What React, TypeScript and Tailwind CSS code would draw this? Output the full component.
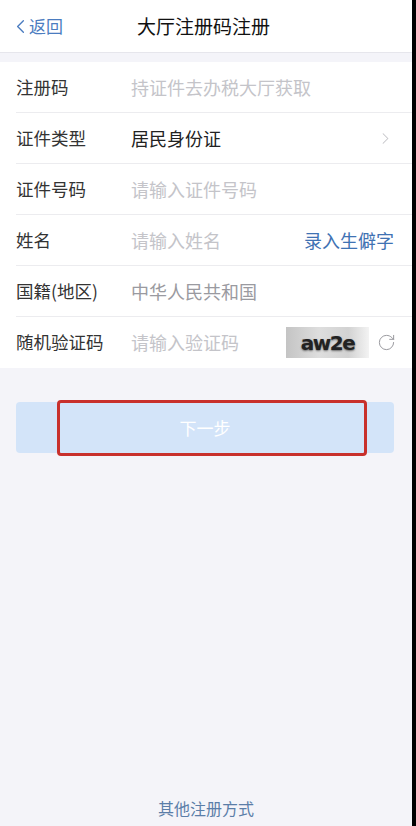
import { ChevronLeft, ChevronRight, RotateCw } from 'lucide-react';

const font = { fontFamily: '"Noto Sans CJK SC", "Noto Sans", sans-serif' };

function Row({ label, children, last }: { label: string; children: React.ReactNode; last?: boolean }) {
    return (
        <div className={`flex items-center h-[51px] pr-[20px] ${last ? '' : 'border-b border-[#ececef]'}`}>
            <span className="w-[115px] shrink-0 text-[17.5px] text-[#333]">{label}</span>
            <div className="flex-1 flex items-center min-w-0 text-[18px]">{children}</div>
        </div>
    );
}

export default function App() {
    return (
        <div style={font} className="relative w-[416px] h-[826px] bg-[#f4f4f9] flex flex-col border-r-[4px] border-black">
            {/* nav */}
            <div className="h-[53px] bg-white flex items-center relative border-b border-[#e6e6ec]">
                <div className="flex items-center pl-[9px] text-[#4b7cc0] text-[17px]">
                    <ChevronLeft size={23} strokeWidth={1.4} className="-mr-[3px]" />
                    <span>返回</span>
                </div>
                <span className="absolute left-[137px] text-[19px] text-[#111]">大厅注册码注册</span>
            </div>

            {/* form */}
            <div className="mt-[9px] bg-white pl-[16px]">
                <Row label="注册码">
                    <span className="text-[#c4c4c9]">持证件去办税大厅获取</span>
                </Row>
                <Row label="证件类型">
                    <span className="text-[#222] flex-1">居民身份证</span>
                    <ChevronRight size={19} strokeWidth={1.3} className="text-[#c4c4c8] -mr-[3px]" />
                </Row>
                <Row label="证件号码">
                    <span className="text-[#c4c4c9]">请输入证件号码</span>
                </Row>
                <Row label="姓名">
                    <span className="text-[#c4c4c9] flex-1">请输入姓名</span>
                    <span className="text-[#3f72b3] -mr-[2px]">录入生僻字</span>
                </Row>
                <Row label="国籍(地区)">
                    <span className="text-[#9a9aa0]">中华人民共和国</span>
                </Row>
                <Row label="随机验证码" last>
                    <span className="text-[#c4c4c9] flex-1">请输入验证码</span>
                    <div className="w-[83px] h-[31px] mr-[8px] flex items-center justify-center bg-[linear-gradient(90deg,#c4c4c4,#dedede_40%,#d2d2d2_75%,#f3f3f3)]">
                        <span
                            style={{ fontFamily: '"DejaVu Sans", sans-serif' }}
                            className="text-[20px] font-bold text-[#222] tracking-[-1.5px] [text-shadow:0_1px_2px_rgba(0,0,0,0.5)]"
                        >
                            aw2e
                        </span>
                    </div>
                    <RotateCw size={19} strokeWidth={1.1} className="text-[#8a8a90] -mr-[4px]" />
                </Row>
            </div>

            {/* button */}
            <div className="relative mt-[34px] ml-[16px] mr-[18px]">
                <div className="h-[51px] rounded-[4px] bg-[#d3e4f9] flex items-center justify-center text-[17px] text-white">
                    下一步
                </div>
                <div className="absolute left-[41px] top-[-2px] w-[310px] h-[56px] border-[3px] border-[#c8302c] rounded-[4px]" />
            </div>

            <div className="flex-1" />
            <div className="pb-[6px] text-center text-[16px] text-[#5b7ea8]">其他注册方式</div>
        </div>
    );
}
